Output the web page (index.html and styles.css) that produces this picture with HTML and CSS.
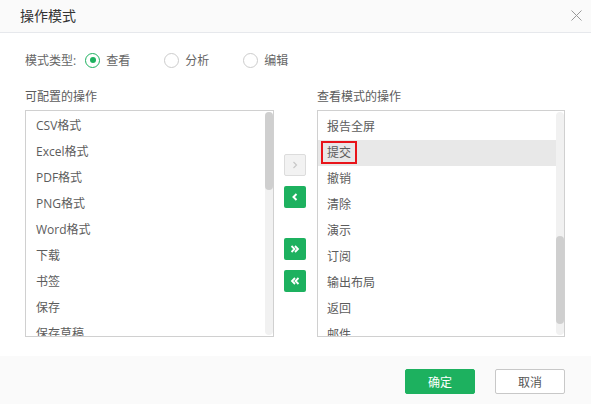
FILE: index.html
```html
<!DOCTYPE html>
<html lang="zh-CN">
<head>
<meta charset="utf-8">
<title>操作模式</title>
<link rel="stylesheet" href="styles.css">
</head>
<body>
<div class="dialog">
  <div class="header">
    <span class="title">操作模式</span>
    <svg class="close" width="11" height="11" viewBox="0 0 11 11"><path d="M0.5 0.5L10.5 10.5M10.5 0.5L0.5 10.5" stroke="#999" stroke-width="1" fill="none"/></svg>
  </div>
  <div class="body">
    <div class="mode-row">
      <span class="mode-label">模式类型:</span>
      <span class="radio checked"><span class="dot"></span></span><span class="radio-text">查看</span>
      <span class="radio"></span><span class="radio-text">分析</span>
      <span class="radio"></span><span class="radio-text">编辑</span>
    </div>
    <div class="lists">
      <div class="col left-col">
        <div class="col-title">可配置的操作</div>
        <div class="listbox">
          <div class="items">
            <div class="item">CSV格式</div>
            <div class="item">Excel格式</div>
            <div class="item">PDF格式</div>
            <div class="item">PNG格式</div>
            <div class="item">Word格式</div>
            <div class="item">下载</div>
            <div class="item">书签</div>
            <div class="item">保存</div>
            <div class="item">保存草稿</div>
          </div>
          <div class="track"><div class="thumb thumb-left"></div></div>
        </div>
      </div>
      <div class="btns">
        <div class="mv disabled"><svg width="8" height="10" viewBox="0 0 8 10"><path d="M2.5 2L5.5 5L2.5 8" stroke="#c8c8c8" stroke-width="1.2" fill="none"/></svg></div>
        <div class="mv"><svg width="8" height="10" viewBox="0 0 8 10"><path d="M5.5 2L2.5 5L5.5 8" stroke="#fff" stroke-width="2" fill="none"/></svg></div>
        <div class="mv far"><svg width="10" height="10" viewBox="0 0 10 10"><path d="M1.5 2L4.5 5L1.5 8M5 2L8 5L5 8" stroke="#fff" stroke-width="1.8" fill="none"/></svg></div>
        <div class="mv"><svg width="10" height="10" viewBox="0 0 10 10"><path d="M5 2L2 5L5 8M8.5 2L5.5 5L8.5 8" stroke="#fff" stroke-width="1.8" fill="none"/></svg></div>
      </div>
      <div class="col right-col">
        <div class="col-title">查看模式的操作</div>
        <div class="listbox">
          <div class="items items-right">
            <div class="item">报告全屏</div>
            <div class="item selected"><span class="mark">提交</span></div>
            <div class="item">撤销</div>
            <div class="item">清除</div>
            <div class="item">演示</div>
            <div class="item">订阅</div>
            <div class="item">输出布局</div>
            <div class="item">返回</div>
            <div class="item">邮件</div>
          </div>
          <div class="track"><div class="thumb thumb-right"></div></div>
        </div>
      </div>
    </div>
  </div>
  <div class="footer">
    <button class="btn primary">确定</button>
    <button class="btn">取消</button>
  </div>
</div>
</body>
</html>
```
FILE: styles.css
```css
* { box-sizing: border-box; }
html, body { margin: 0; padding: 0; background: #fff; }
body {
  font-family: "Open Sans", "Noto Sans CJK SC", sans-serif;
  font-size: 12px;
  color: #5c5c5c;
}
.dialog {
  width: 591px;
  height: 404px;
  display: flex;
  flex-direction: column;
  overflow: hidden;
}
.header {
  height: 33px;
  flex: none;
  background: #fafafa;
  border-bottom: 1px solid #e6e8ec;
  display: flex;
  align-items: center;
  justify-content: space-between;
  padding: 0 9px 0 20px;
}
.title {
  font-size: 14px;
  color: #333;
  line-height: 20px;
  margin-top: -1px;
}
.close { display: block; margin-top: -2px; }
.body {
  flex: 1;
  padding: 17px 0 0 25px;
}
.mode-row {
  height: 20px;
  display: flex;
  align-items: center;
  color: #666;
}
.mode-label { margin-right: 9px; }
.radio {
  width: 15px;
  height: 15px;
  border-radius: 50%;
  border: 1px solid #ccc;
  display: flex;
  align-items: center;
  justify-content: center;
  margin-right: 6px;
}
.radio.checked { border-color: #1db15f; }
.dot { width: 6px; height: 6px; border-radius: 50%; background: #1db15f; }
.radio-text { margin-right: 34px; }
.lists {
  display: flex;
  margin-top: 17px;
}
.col { display: flex; flex-direction: column; }
.left-col { width: 249px; }
.right-col { width: 248px; }
.col-title {
  line-height: 20px;
  height: 20px;
  color: #5c5c5c;
  margin-bottom: 3px;
}
.listbox {
  height: 227px;
  border: 1px solid #d0d0d0;
  display: flex;
  overflow: hidden;
}
.items {
  flex: 1;
  padding: 2px 0 0 0;
  overflow: hidden;
}
.items-right { padding-top: 3px; }
.item {
  height: 26px;
  line-height: 26px;
  padding-left: 10px;
  white-space: nowrap;
}
.right-col .item { padding-left: 9px; }
.item.selected { background: #e8e8e8; }
.mark {
  display: inline-block;
  line-height: 19px;
  border: 2px solid #e8141a;
  padding: 0 4px;
  margin-left: -6px;
  vertical-align: middle;
  margin-top: -3px;
}
.track {
  width: 8px;
  flex: none;
  background: #f1f1f1;
  border-radius: 4px;
  margin: 1px 0 1px 0;
}
.thumb { width: 8px; background: #cfcfcf; border-radius: 4px; }
.thumb-left { height: 78px; margin-top: 0; }
.thumb-right { height: 88px; margin-top: 124px; }
.btns {
  width: 22px;
  margin: 0 11px 0 10px;
  padding-top: 67px;
  display: flex;
  flex-direction: column;
  gap: 10px;
}
.mv {
  width: 22px;
  height: 22px;
  border-radius: 2px;
  background: #1db15f;
  display: flex;
  align-items: center;
  justify-content: center;
}
.mv svg { display: block; }
.mv.disabled { background: #f2f2f2; border: 1px solid #dcdcdc; }
.mv.far { margin-top: 20px; }
.footer {
  height: 48px;
  flex: none;
  background: #fafafa;
  display: flex;
  justify-content: flex-end;
  align-items: flex-start;
  padding: 13px 26px 0 0;
  gap: 20px;
}
.btn {
  width: 70px;
  height: 25px;
  font-family: "Open Sans", "Noto Sans CJK SC", sans-serif;
  font-size: 12px;
  border: 1px solid #c8c8c8;
  background: #fff;
  color: #555;
  border-radius: 2px;
  padding: 0;
}
.btn.primary { background: #1db15f; border-color: #1db15f; color: #fff; }
```
